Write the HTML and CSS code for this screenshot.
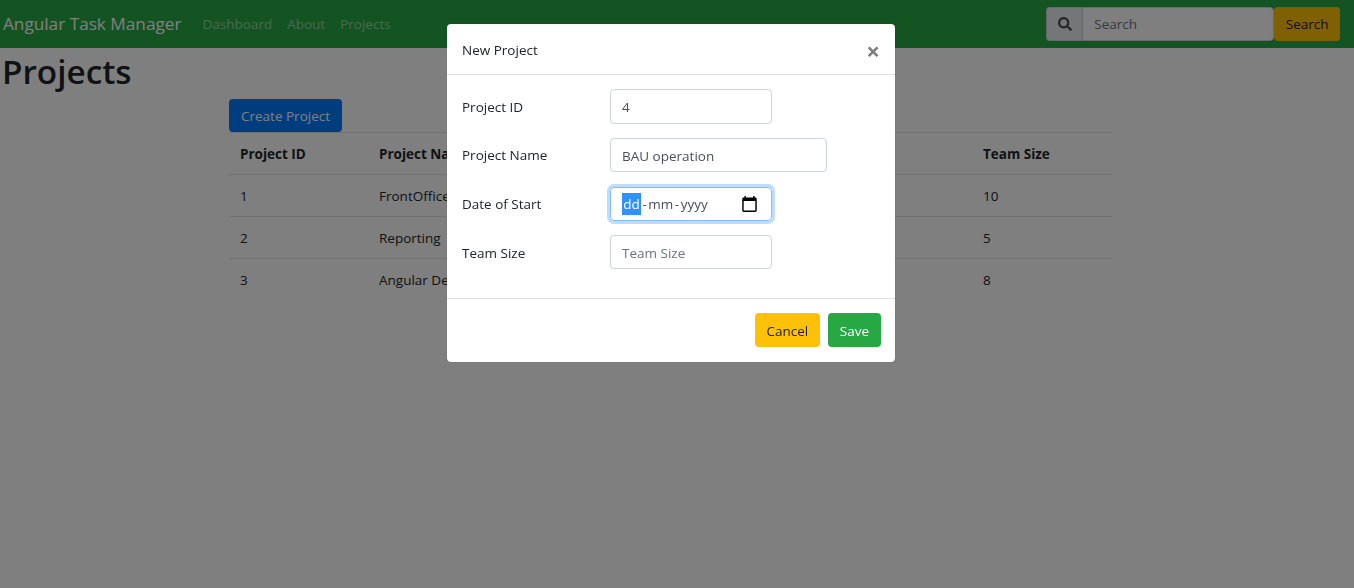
FILE: index.html
```html
<!DOCTYPE html>
<html lang="en">
<head>
  <meta charset="UTF-8">
  <title>Angular Task Manager</title>
  <link rel="stylesheet" href="styles.css">
</head>
<body>
  <nav class="navbar">
    <a class="brand" href="#">Angular Task Manager</a>
    <ul class="nav-links">
      <li><a href="#">Dashboard</a></li>
      <li><a href="#">About</a></li>
      <li><a href="#">Projects</a></li>
    </ul>
    <form class="nav-search">
      <span class="search-addon">
        <svg width="14" height="14" viewBox="0 0 512 512"><path fill="currentColor" d="M505 442.700L405.300 343c-4.500-4.500-10.600-7-17-7H372c27.600-35.300 44-79.700 44-128C416 93.100 322.900 0 208 0S0 93.100 0 208s93.100 208 208 208c48.300 0 92.700-16.400 128-44v16.300c0 6.400 2.500 12.500 7 17l99.700 99.700c9.400 9.400 24.600 9.400 33.900 0l28.300-28.300c9.400-9.400 9.400-24.600.1-34zM208 336c-70.700 0-128-57.200-128-128 0-70.700 57.200-128 128-128 70.700 0 128 57.200 128 128 0 70.700-57.200 128-128 128z"/></svg>
      </span>
      <input class="search-input" type="text" placeholder="Search">
      <button class="btn btn-warning" type="button">Search</button>
    </form>
  </nav>

  <h1 class="page-title">Projects</h1>

  <main class="content">
    <button class="btn btn-primary" type="button">Create Project</button>
    <table class="projects">
      <colgroup>
        <col class="col-id">
        <col class="col-name">
        <col class="col-date">
        <col>
      </colgroup>
      <thead>
        <tr><th>Project ID</th><th>Project Name</th><th>Date of Start</th><th>Team Size</th></tr>
      </thead>
      <tbody>
        <tr><td>1</td><td>FrontOffice</td><td></td><td>10</td></tr>
        <tr><td>2</td><td>Reporting</td><td></td><td>5</td></tr>
        <tr><td>3</td><td>Angular Development</td><td></td><td>8</td></tr>
      </tbody>
    </table>
  </main>

  <div class="backdrop"></div>

  <div class="modal">
    <div class="modal-header">
      <span class="modal-title">New Project</span>
      <span class="close">&times;</span>
    </div>
    <form class="modal-body">
      <div class="form-row">
        <label for="projectId">Project ID</label>
        <input id="projectId" class="field field-short" type="text" value="4">
      </div>
      <div class="form-row">
        <label for="projectName">Project Name</label>
        <input id="projectName" class="field field-long" type="text" value="BAU operation">
      </div>
      <div class="form-row">
        <label>Date of Start</label>
        <div class="field field-short date-field">
          <span class="date-part is-selected">dd</span><span class="date-sep">-</span><span class="date-part">mm</span><span class="date-sep">-</span><span class="date-part">yyyy</span>
          <svg class="date-icon" width="15" height="16" viewBox="2 1 20 22"><path fill="currentColor" d="M20 3h-1V1h-2v2H7V1H5v2H4c-1.100 0-2 .9-2 2v16c0 1.100.9 2 2 2h16c1.100 0 2-.9 2-2V5c0-1.100-.9-2-2-2zm0 18H4V8h16v13z"/></svg>
        </div>
      </div>
      <div class="form-row">
        <label for="teamSize">Team Size</label>
        <input id="teamSize" class="field field-short" type="text" placeholder="Team Size">
      </div>
    </form>
    <div class="modal-footer">
      <button class="btn btn-warning" type="button">Cancel</button>
      <button class="btn btn-success" type="button">Save</button>
    </div>
  </div>
</body>
</html>
```
FILE: styles.css
```css
* {
  box-sizing: border-box;
}

html, body {
  margin: 0;
  padding: 0;
  height: 100%;
  overflow: hidden;
}

body {
  background: white;
  color: #212529;
  font-family: "Open Sans", sans-serif;
  font-size: 13.5px;
  line-height: 1.5;
}

a {
  text-decoration: none;
}

.navbar {
  display: flex;
  align-items: center;
  height: 48px;
  padding: 0 14px 0 3px;
  background-color: #28a745;
}

.brand {
  margin-right: 21px;
  color: white;
  font-size: 17.200px;
}

.nav-links {
  display: flex;
  gap: 15px;
  margin: 0;
  padding: 0;
  list-style: none;
}

.nav-links a {
  color: rgba(255, 255, 255, 0.5);
}

.nav-search {
  display: flex;
  margin-left: auto;
}

.search-addon {
  display: flex;
  align-items: center;
  justify-content: center;
  width: 36px;
  height: 34px;
  border: 1px solid #ced4da;
  border-right: 0;
  border-radius: 4px 0 0 4px;
  background: #e9ecef;
  color: #495057;
}

.search-input {
  width: 192px;
  height: 34px;
  padding: 0 11px;
  border: 1px solid #ced4da;
  border-radius: 0 4px 4px 0;
  color: #495057;
  font: inherit;
}

.search-input::placeholder,
.field::placeholder {
  color: #6c757d;
  opacity: 1;
}

.btn {
  width: max-content;
  height: 34px;
  padding: 2px 10.500px 0;
  border: 1px solid transparent;
  border-radius: 4px;
  font: inherit;
}

.nav-search .btn {
  padding-top: 0;
}

.btn-warning {
  background-color: #ffc107;
  color: #212529;
}

.btn-primary {
  background-color: #007bff;
  color: white;
}

.btn-success {
  padding-left: 11px;
  padding-right: 11px;
  background-color: #28a745;
  color: white;
}

.page-title {
  margin: 0;
  padding-left: 2px;
  font-size: 33.300px;
  font-weight: 600;
  line-height: 46px;
}

.content {
  width: 883px;
  margin: 5px 0 0 229px;
}

.content > .btn {
  display: block;
  height: 33px;
  padding: 1px 11px 0;
}

.projects {
  width: 100%;
  border-collapse: collapse;
  table-layout: fixed;
}

.col-id {
  width: 139px;
}

.col-name {
  width: 300px;
}

.col-date {
  width: 304px;
}

.projects th,
.projects td {
  height: 42px;
  padding: 1.500px 11px 0;
  text-align: left;
  white-space: nowrap;
  overflow: hidden;
}

.projects th {
  padding-top: 2px;
  font-weight: 700;
  border-top: 1px solid #dee2e6;
  border-bottom: 1px solid #dee2e6;
}

.projects tbody tr + tr td {
  border-top: 1px solid #dee2e6;
}

.backdrop {
  position: fixed;
  top: 0;
  left: 0;
  width: 100vw;
  height: 100vh;
  background-color: rgba(0, 0, 0, 0.5);
}

.modal {
  position: fixed;
  top: 24px;
  left: 447px;
  width: 448px;
  height: 338px;
  display: flex;
  flex-direction: column;
  border-radius: 4px;
  background: white;
  box-shadow: 0 0 1px rgba(0, 0, 0, 0.4);
}

.modal-header {
  display: flex;
  align-items: center;
  justify-content: space-between;
  height: 51px;
  padding: 3px 15px 0;
  border-bottom: 1px solid #dee2e6;
}

.close {
  color: #7d7d7d;
  font-size: 24px;
  font-weight: 700;
  line-height: 1;
}

.modal-body {
  flex: 1;
  padding: 14.400px 15px 0;
}

.form-row {
  display: flex;
  align-items: center;
  margin-bottom: 14.400px;
}

.form-row label {
  width: 148px;
  padding-top: 1px;
}

.field {
  height: 34.200px;
  padding: 1px 11px 0;
  border: 1px solid #ced4da;
  border-radius: 4px;
  color: #495057;
  font: inherit;
}

.field-short {
  width: 162px;
}

.field-long {
  width: 217px;
}

.date-field {
  display: flex;
  align-items: center;
  border-color: #80bdff;
  box-shadow: 0 0 0 3px rgba(0, 123, 255, 0.25);
}

.date-part {
  line-height: 22px;
}

.date-part.is-selected {
  width: 19px;
  background-color: #3390ff;
  color: white;
  text-align: center;
}

.date-sep {
  padding: 0 1.500px;
}

.date-icon {
  margin-left: auto;
  margin-right: 3px;
  color: black;
}

.modal-footer {
  display: flex;
  justify-content: flex-end;
  gap: 8px;
  height: 64px;
  padding: 14px;
  border-top: 1px solid #dee2e6;
}
```
